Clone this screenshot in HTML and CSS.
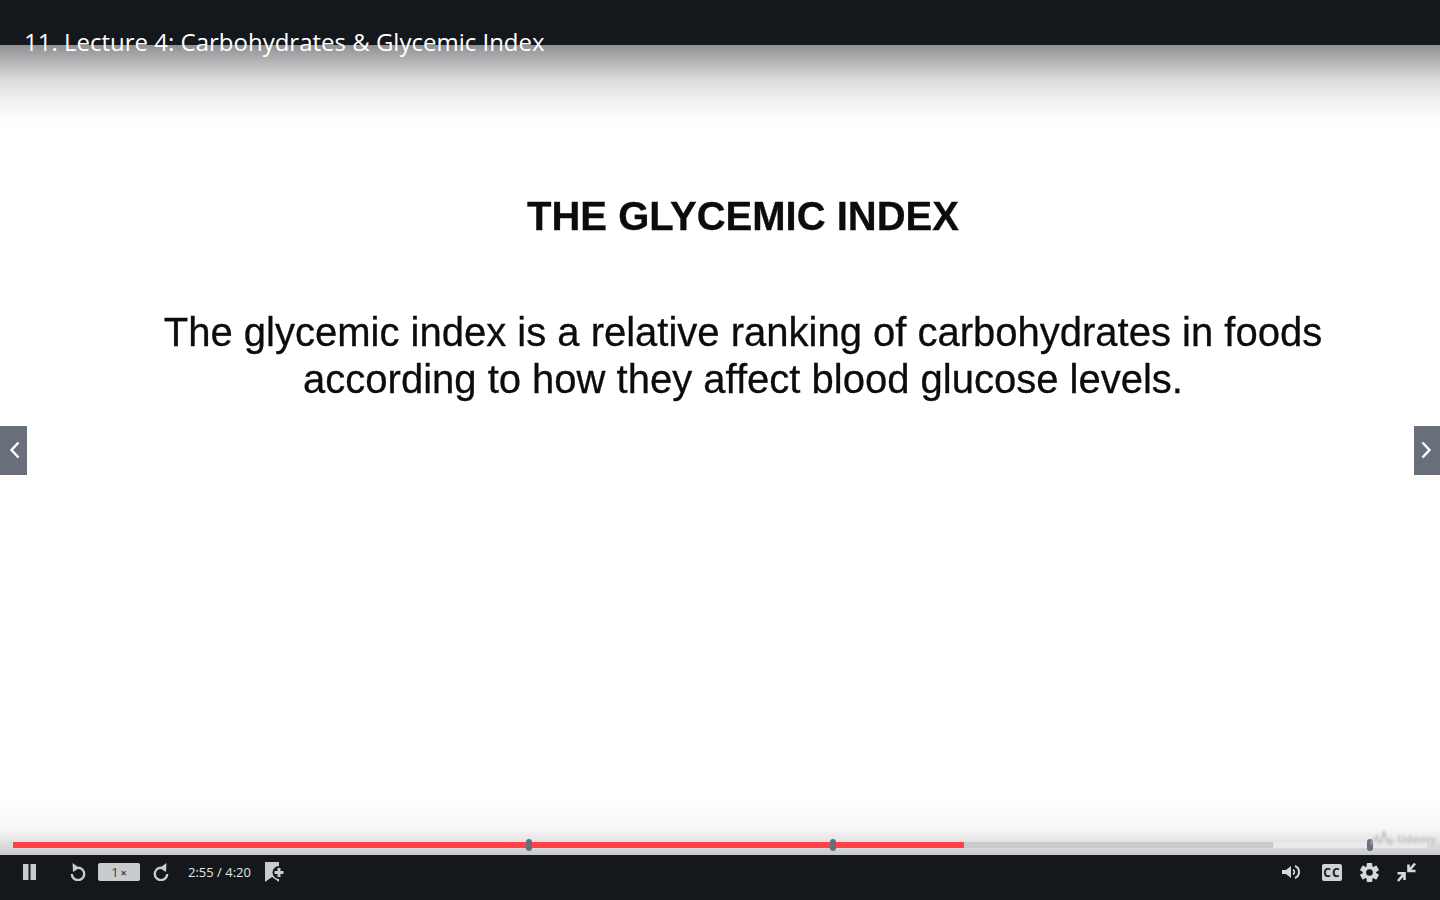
FILE: index.html
```html
<!DOCTYPE html>
<html lang="en">
<head>
	<meta charset="UTF-8">
	<title>11. Lecture 4: Carbohydrates &amp; Glycemic Index</title>
	<link rel="stylesheet" href="styles.css">
</head>
<body>
	<div class="player">
		<div class="top-bar"></div>
		<div class="title">11. Lecture 4: Carbohydrates &amp; Glycemic Index</div>

		<div class="stage">
			<div class="shade-top"></div>
			<div class="shade-bottom"></div>

			<div class="slide">
				<h1 class="slide-title">THE GLYCEMIC INDEX</h1>
				<p class="slide-text">The glycemic index is a relative ranking of carbohydrates in foods<br>according to how they affect blood glucose levels.</p>
			</div>

			<a class="nav nav-prev" href="javascript:;">
				<svg width="12" height="18" viewBox="0 0 12 18"><path d="M10.500 1.500L3.500 9l7 7.500" fill="none" stroke="#fff" stroke-width="2.500"/></svg>
			</a>
			<a class="nav nav-next" href="javascript:;">
				<svg width="12" height="18" viewBox="0 0 12 18"><path d="M1.500 1.500L8.500 9l-7 7.500" fill="none" stroke="#fff" stroke-width="2.500"/></svg>
			</a>

			<div class="progress">
				<div class="progress-buffer"></div>
				<div class="progress-played"></div>
				<span class="mark mark-1"></span>
				<span class="mark mark-2"></span>
				<span class="mark mark-3"></span>
			</div>

			<div class="watermark">
				<svg width="24" height="16" viewBox="0 0 24 16"><path d="M1 14L7 6l2 8M11 13l3-12 3 12M19 8l1 6 3-3" fill="none" stroke="#c4c4c8" stroke-width="2"/></svg>
				<span>Udemy</span>
			</div>
		</div>

		<div class="controls">
			<div class="controls-left">
				<svg class="icon-pause" width="13" height="16" viewBox="0 0 13 16"><path d="M0 0h5.500v16H0zM7.500 0H13v16H7.500z" fill="#c9cbce"/></svg>
				<svg class="icon-back" width="16" height="18" viewBox="0 0 16 18"><path d="M8 4.700A6.200 6.200 0 1 1 1.800 11" fill="none" stroke="#c9cbce" stroke-width="2.400"/><path d="M2.500 0l.5 9 6.500-4z" fill="#c9cbce"/></svg>
				<div class="speed">1<span class="speed-x">×</span></div>
				<svg class="icon-forward" width="16" height="18" viewBox="0 0 16 18"><path d="M8 4.700A6.200 6.200 0 1 0 14.200 11" fill="none" stroke="#c9cbce" stroke-width="2.400"/><path d="M13.500 0L13 9 6.500 5z" fill="#c9cbce"/></svg>
				<div class="time">2:55 / 4:20</div>
				<svg class="icon-bookmark" width="20" height="20" viewBox="0 0 20 20"><path d="M0 0h14v20l-7-5-7 5z" fill="#c9cbce"/><circle cx="14" cy="10.500" r="6.500" fill="#14171c"/><path d="M12.500 6v3h-3v3h3v3h3v-3h3V9h-3V6z" fill="#c9cbce"/></svg>
			</div>
			<div class="controls-right">
				<svg class="icon-sound" width="19" height="14" viewBox="0 0 19 14"><path d="M0 5h4l5-4v12L4 9H0z" fill="#d6d8da"/><path d="M11 4.500a3 3 0 0 1 0 5" fill="none" stroke="#d6d8da" stroke-width="1.800"/><path d="M13 1a6.500 6.500 0 0 1 0 12" fill="none" stroke="#d6d8da" stroke-width="2"/></svg>
				<div class="cc">CC</div>
				<svg class="icon-gear" width="19" height="19" viewBox="0 0 20 20">
					<g fill="#d6d8da">
						<rect x="7" y="0" width="6" height="20" rx="1"/>
						<rect x="7" y="0" width="6" height="20" rx="1" transform="rotate(60 10 10)"/>
						<rect x="7" y="0" width="6" height="20" rx="1" transform="rotate(120 10 10)"/>
						<circle cx="10" cy="10" r="7"/>
					</g>
					<circle cx="10" cy="10" r="3.500" fill="#14171c"/>
				</svg>
				<svg class="icon-min" width="19" height="20" viewBox="0 0 19 20"><path d="M11.500 2.500v6.500h7M12 8.500L18 1.500M0.500 11.300h7V18M7 11.800L1 19" fill="none" stroke="#d6d8da" stroke-width="2.600"/></svg>
			</div>
		</div>
	</div>
</body>
</html>
```

FILE: styles.css
```css
html, body {
	margin: 0;
	height: 100%;
	background: #14171c;
}
.player {
	position: relative;
	display: flex;
	flex-direction: column;
	height: 100vh;
	overflow: hidden;
	font-family: "Open Sans", sans-serif;
}
.top-bar {
	height: 45px;
	flex: none;
	background: #14171c;
}
.title {
	position: absolute;
	left: 24px;
	top: 26px;
	z-index: 5;
	font-size: 24px;
	line-height: 32px;
	color: #fff;
	white-space: nowrap;
}
.stage {
	position: relative;
	flex: 1;
	background: #fff;
}
.shade-top {
	position: absolute;
	left: 0;
	right: 0;
	top: 0;
	height: 85px;
	background: linear-gradient(to bottom, #8f9093, #b2b2b4 18%, #dcdcdd 41%, #f1f1f2 65%, #fafafa 82%, #fff);
}
.shade-bottom {
	position: absolute;
	left: 0;
	right: 0;
	bottom: 0;
	height: 55px;
	background: linear-gradient(to bottom, #fff, #f8f8f8 50%, #e8e8e8 70%, #c9c9cd);
}
.slide {
	position: relative;
	display: flex;
	flex-direction: column;
	align-items: center;
	padding-top: 148px;
	padding-left: 46px;
	font-family: "Liberation Sans", Arial, sans-serif;
	color: #0c0c0c;
	text-align: center;
	filter: blur(0.4px);
	-webkit-text-stroke: 0.3px #0c0c0c;
}
.slide-title {
	margin: 0 0 70px;
	font-size: 40px;
	line-height: 46px;
	font-weight: bold;
}
.slide-text {
	margin: 0;
	font-size: 40px;
	line-height: 47px;
}
.nav {
	position: absolute;
	top: 381px;
	display: flex;
	align-items: center;
	justify-content: center;
	width: 27px;
	height: 49px;
	background: #686f7a;
}
.nav svg {
	margin-bottom: 1px;
}
.nav-prev {
	left: 0;
}
.nav-next {
	right: 0;
	width: 26px;
}
.watermark {
	position: absolute;
	right: 4px;
	bottom: 9px;
	display: flex;
	align-items: center;
	gap: 3px;
	font-size: 11px;
	font-weight: bold;
	color: #c4c4c8;
	filter: blur(0.8px);
}
.progress {
	position: absolute;
	left: 13px;
	right: 13px;
	bottom: 7px;
	height: 6px;
	background: #e8e9ea;
}
.progress-buffer {
	position: absolute;
	left: 0;
	top: 0;
	bottom: 0;
	width: 1260px;
	background: #c8cacc;
}
.progress-played {
	position: absolute;
	left: 0;
	top: 0;
	bottom: 0;
	width: 951px;
	background: #ff4148;
}
.mark {
	position: absolute;
	top: -3px;
	width: 6px;
	height: 12px;
	border-radius: 3px;
	background: #686f7a;
}
.mark-1 {
	left: 513px;
}
.mark-2 {
	left: 817px;
}
.mark-3 {
	left: 1354px;
}
.controls {
	display: flex;
	flex: none;
	align-items: center;
	justify-content: space-between;
	box-sizing: border-box;
	height: 45px;
	padding-bottom: 11px;
	background: #14171c;
}
.controls-left {
	display: flex;
	align-items: center;
}
.controls-right {
	display: flex;
	align-items: center;
	padding-right: 24px;
}
.icon-pause {
	margin-left: 23px;
}
.icon-back {
	margin-left: 34px;
}
.speed {
	margin-left: 12px;
	width: 42px;
	height: 18px;
	border-radius: 2px;
	background: #c9cbce;
	font-size: 13px;
	line-height: 18px;
	text-align: center;
	color: #3c4047;
}
.speed-x {
	margin-left: 2px;
	font-size: 11px;
	font-weight: bold;
}
.icon-forward {
	margin-left: 13px;
}
.time {
	margin-left: 19px;
	font-size: 13px;
	color: #e4e5e7;
}
.icon-bookmark {
	margin-left: 14px;
}
.cc {
	margin-left: 21px;
	width: 20px;
	height: 17px;
	border-radius: 2px;
	background: #d0d2d4;
	font-size: 12px;
	font-weight: bold;
	letter-spacing: 1px;
	line-height: 17px;
	text-align: center;
	color: #14171c;
}
.icon-gear {
	margin-left: 18px;
}
.icon-min {
	margin-left: 18px;
}
```
